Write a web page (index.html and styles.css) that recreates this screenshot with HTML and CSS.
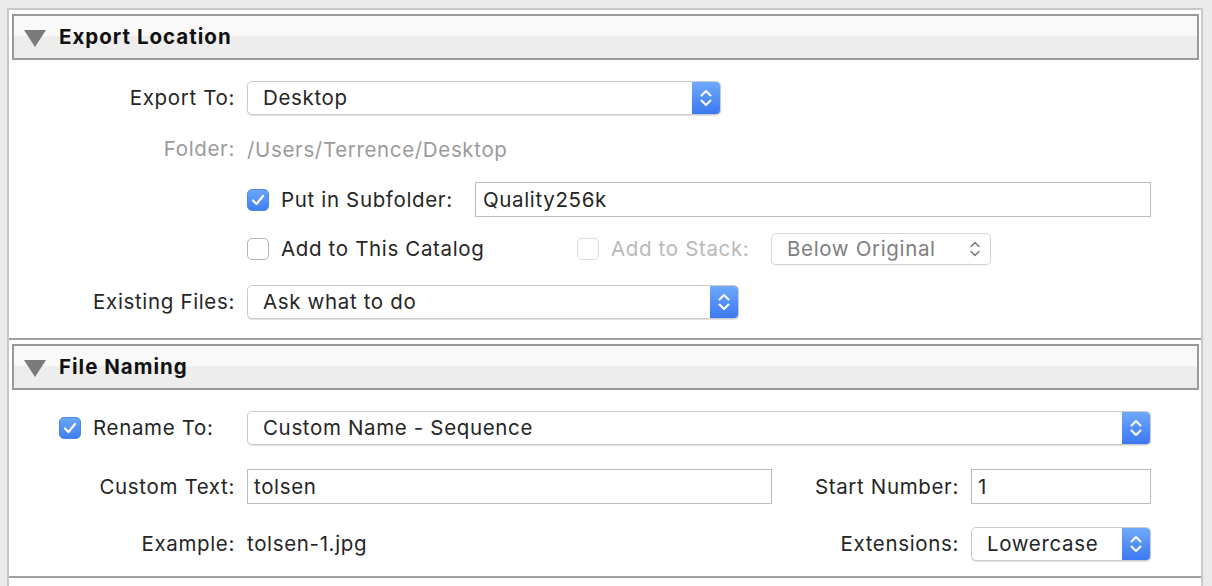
FILE: index.html
```html
<!DOCTYPE html>
<html>
<head>
<meta charset="utf-8">
<link rel="stylesheet" href="styles.css">
</head>
<body>
<div class="panel">
  <section class="section">
    <div class="header"><span class="tri"></span><span class="title">Export Location</span></div>
    <div class="body body1">
      <div class="row r1">
        <div class="label">Export To:</div>
        <div class="content">
          <div class="select blue w-export"><span class="sel-text">Desktop</span><span class="stepper"><svg width="14" height="20" viewBox="0 0 14 20"><path d="M2.5 7.5 L7 3 L11.5 7.5 M2.5 12.5 L7 17 L11.5 12.5" fill="none" stroke="#fff" stroke-width="2" stroke-linecap="round" stroke-linejoin="round"/></svg></span></div>
        </div>
      </div>
      <div class="row r2">
        <div class="label muted">Folder:</div>
        <div class="content muted">/Users/Terrence/Desktop</div>
      </div>
      <div class="row r3">
        <div class="label"></div>
        <div class="content">
          <span class="cb checked"><svg width="14" height="12" viewBox="0 0 14 12"><path d="M2 6.5 L5.5 10 L12 2" fill="none" stroke="#fff" stroke-width="2.2" stroke-linecap="round" stroke-linejoin="round"/></svg></span>
          <span class="cb-label sub-label">Put in Subfolder:</span>
          <div class="input w-sub">Quality256k</div>
        </div>
      </div>
      <div class="row r4">
        <div class="label"></div>
        <div class="content">
          <div class="group-catalog">
            <span class="cb"></span>
            <span class="cb-label">Add to This Catalog</span>
          </div>
          <span class="cb disabled"></span>
          <span class="cb-label disabled-text stack-label">Add to Stack:</span>
          <div class="select plain w-stack"><span class="sel-text grey">Below Original</span><span class="stepper plain-step"><svg width="14" height="20" viewBox="0 0 14 20"><path d="M3 7.5 L7 3.5 L11 7.5 M3 12.5 L7 16.5 L11 12.5" fill="none" stroke="#7d7d7d" stroke-width="1.6" stroke-linecap="round" stroke-linejoin="round"/></svg></span></div>
        </div>
      </div>
      <div class="row r5">
        <div class="label">Existing Files:</div>
        <div class="content">
          <div class="select blue w-exist"><span class="sel-text">Ask what to do</span><span class="stepper"><svg width="14" height="20" viewBox="0 0 14 20"><path d="M2.5 7.5 L7 3 L11.5 7.5 M2.5 12.5 L7 17 L11.5 12.5" fill="none" stroke="#fff" stroke-width="2" stroke-linecap="round" stroke-linejoin="round"/></svg></span></div>
        </div>
      </div>
    </div>
  </section>
  <section class="section sec2">
    <div class="header"><span class="tri"></span><span class="title">File Naming</span></div>
    <div class="body body2">
      <div class="row s1">
        <div class="label left">
          <span class="cb checked"><svg width="14" height="12" viewBox="0 0 14 12"><path d="M2 6.5 L5.5 10 L12 2" fill="none" stroke="#fff" stroke-width="2.2" stroke-linecap="round" stroke-linejoin="round"/></svg></span>
          <span class="cb-label">Rename To:</span>
        </div>
        <div class="content">
          <div class="select blue w-full"><span class="sel-text">Custom Name - Sequence</span><span class="stepper"><svg width="14" height="20" viewBox="0 0 14 20"><path d="M2.5 7.5 L7 3 L11.5 7.5 M2.5 12.5 L7 17 L11.5 12.5" fill="none" stroke="#fff" stroke-width="2" stroke-linecap="round" stroke-linejoin="round"/></svg></span></div>
        </div>
      </div>
      <div class="row s2">
        <div class="label">Custom Text:</div>
        <div class="content split">
          <div class="input small-pad">tolsen</div>
          <div class="sublabel">Start Number:</div>
          <div class="input small-pad">1</div>
        </div>
      </div>
      <div class="row s3">
        <div class="label">Example:</div>
        <div class="content split">
          <div class="plain-text">tolsen-1.jpg</div>
          <div class="sublabel">Extensions:</div>
          <div class="select blue"><span class="sel-text">Lowercase</span><span class="stepper"><svg width="14" height="20" viewBox="0 0 14 20"><path d="M2.5 7.5 L7 3 L11.5 7.5 M2.5 12.5 L7 17 L11.5 12.5" fill="none" stroke="#fff" stroke-width="2" stroke-linecap="round" stroke-linejoin="round"/></svg></span></div>
        </div>
      </div>
    </div>
  </section>
</div>
</body>
</html>
```

FILE: styles.css
```css
html, body {
  margin: 0;
  padding: 0;
}
body {
  background: #ebebeb;
  font-family: "Inter", "Roboto", "Liberation Sans", sans-serif;
  font-size: 20.5px;
  letter-spacing: 0.65px;
  color: #262626;
  height: 586px;
  overflow: hidden;
}
.panel {
  margin: 8px 0 0 7px;
  width: 1192px;
  height: 700px;
  background: #fff;
  border: 2px solid #c8c8c8;
  border-bottom: none;
}
.section {
  display: flex;
  flex-direction: column;
}
.sec2 {
  border-top: 2px solid #a2a2a2;
}
.header {
  margin: 4px 2px 0 3px;
  height: 42px;
  border: 2px solid #999;
  background: linear-gradient(#f9f9f9 0, #f9f9f9 20px, #ededed 20px, #ededed 100%);
  display: flex;
  align-items: center;
}
.tri {
  width: 0;
  height: 0;
  margin-left: 10px;
  margin-top: 2px;
  border-left: 11px solid transparent;
  border-right: 11px solid transparent;
  border-top: 17px solid #7a7a7a;
}
.title {
  margin-left: 13px;
  margin-top: -2px;
  font-weight: 700;
  font-size: 20.5px;
  color: #111;
  letter-spacing: 1px;
}
.body {
  display: flex;
  flex-direction: column;
  padding-right: 50px;
}
.body1 {
  padding-top: 21px;
  padding-bottom: 19px;
}
.body2 {
  padding-top: 21px;
  padding-bottom: 15px;
  border-bottom: 2px solid #a2a2a2;
}
.row {
  display: flex;
  align-items: center;
  height: 34px;
}
.r2 { margin-top: 17px; }
.r3 { margin-top: 16px; height: 35px; }
.r4 { margin-top: 15px; }
.r5 { margin-top: 19px; }
.s2 { margin-top: 24px; height: 35px; }
.s3 { margin-top: 23px; }
.label {
  width: 226px;
  flex: none;
  text-align: right;
  margin-right: 12px;
  white-space: nowrap;
  padding-bottom: 1px;
}
.label.left {
  text-align: left;
  display: flex;
  align-items: center;
  padding-left: 50px;
  box-sizing: border-box;
}
.content {
  flex: 1;
  display: flex;
  align-items: center;
  height: 100%;
  white-space: nowrap;
}
.muted {
  color: #9b9b9b;
}
.cb {
  width: 20px;
  height: 20px;
  flex: none;
  border: 1px solid #b4b4b4;
  border-radius: 5px;
  background: #fff;
  display: flex;
  align-items: center;
  justify-content: center;
}
.cb.checked {
  border-color: #4a86ee;
  background: linear-gradient(#6aa6fb, #3f7ff2);
}
.cb.disabled {
  border-color: #dcdcdc;
}
.cb-label {
  margin-left: 12px;
  padding-bottom: 1px;
}
.sub-label {
  width: 174px;
  margin-right: 20px;
}
.group-catalog {
  display: flex;
  align-items: center;
  width: 330px;
}
.disabled-text {
  color: #b9b9b9;
}
.stack-label {
  width: 148px;
  margin-right: 12px;
}
.input {
  height: 33px;
  border: 1px solid #bdbdbd;
  background: #fff;
  display: flex;
  align-items: center;
  padding-left: 7px;
  box-sizing: content-box;
}
.w-sub {
  width: 667px;
}
.small-pad {
  padding-left: 6px;
}
.select {
  position: relative;
  height: 32px;
  border: 1px solid #cbcbcb;
  border-radius: 5px;
  background: #fff;
  box-shadow: 0 1px 1px rgba(0, 0, 0, 0.12);
  display: flex;
  align-items: center;
  justify-content: space-between;
  overflow: hidden;
}
.sel-text {
  padding-left: 15px;
  padding-bottom: 1px;
}
.sel-text.grey {
  color: #808080;
}
.stepper {
  width: 28px;
  height: 100%;
  background: linear-gradient(#6ea9fb, #3c78f3);
  display: flex;
  align-items: center;
  justify-content: center;
}
.plain-step {
  background: transparent;
  width: 30px;
}
.select.plain {
  border-color: #d6d6d6;
  box-shadow: 0 1px 1px rgba(0, 0, 0, 0.06);
}
.w-export { width: 472px; }
.w-exist { width: 490px; }
.w-full { width: 902px; }
.w-stack { width: 218px; height: 30px; }
.split {
  display: grid;
  grid-template-columns: 1fr 199px 180px;
  align-items: center;
}
.split .input {
  height: 33px;
}
.sublabel {
  text-align: right;
  padding-right: 12px;
  padding-bottom: 1px;
}
.plain-text {
  padding-bottom: 1px;
}
```
